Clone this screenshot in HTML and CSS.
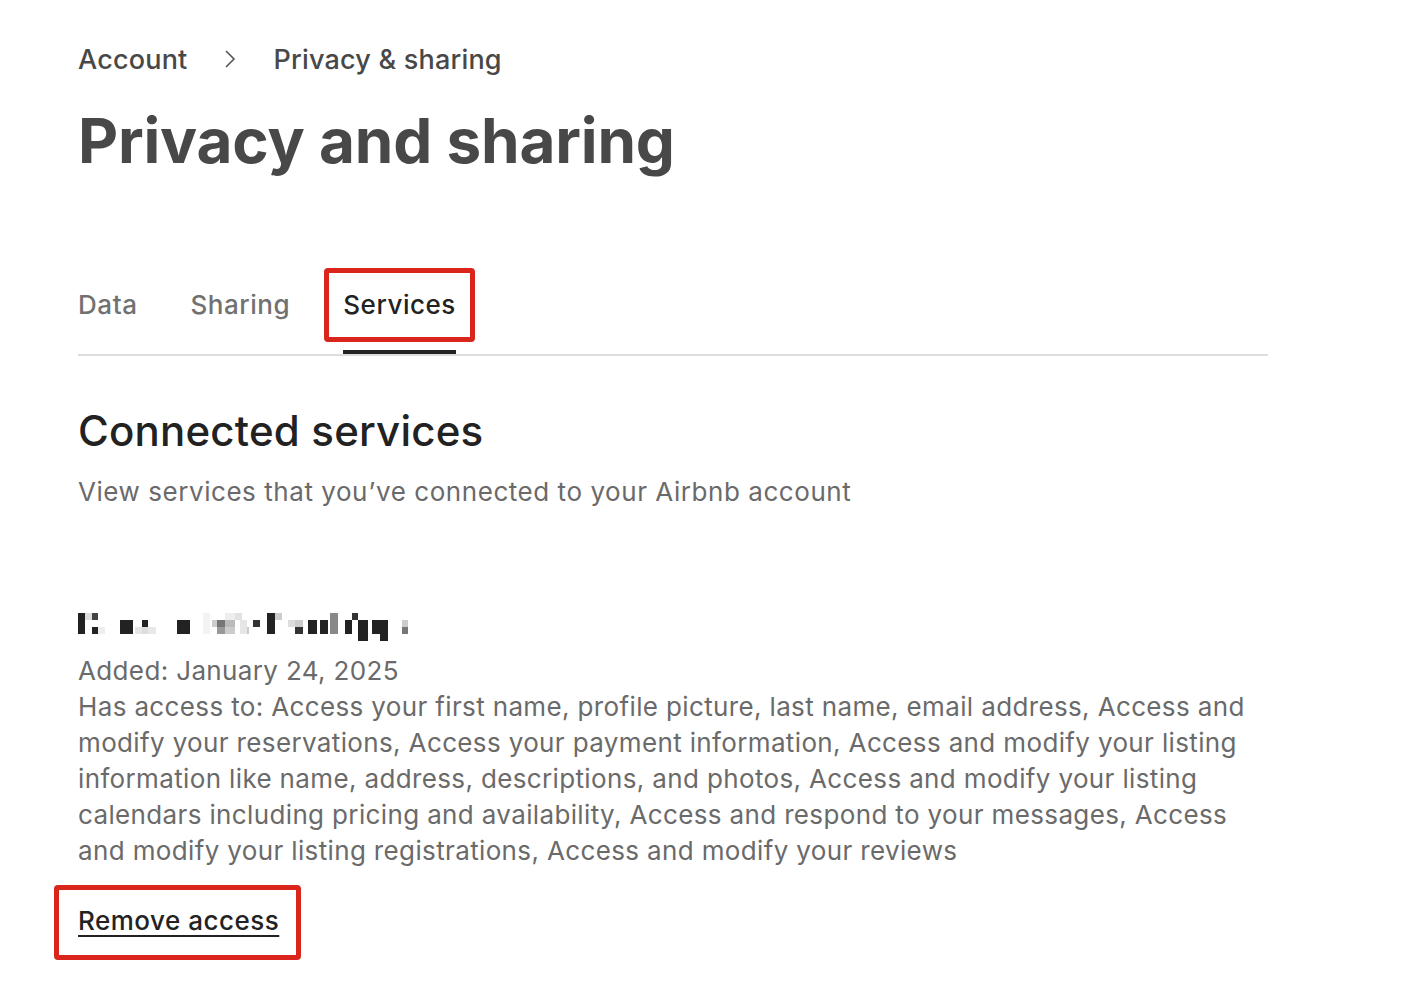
FILE: index.html
```html
<!DOCTYPE html>
<html lang="en">
<head>
    <meta charset="UTF-8" />
    <title>Privacy and sharing</title>
    <link rel="stylesheet" href="styles.css">
</head>
<body>
    <div class="page">
        <nav class="crumbs">
            <span>Account</span>
            <svg class="chevron" viewBox="0 0 12 20" width="12" height="20"><path d="M2 2 L10 10 L2 18" fill="none" stroke="#555" stroke-width="1.6"/></svg>
            <span>Privacy &amp; sharing</span>
        </nav>
        <h1>Privacy and sharing</h1>

        <div class="tabs">
            <div class="tab">Data</div>
            <div class="tab">Sharing</div>
            <div class="tab active">Services<span class="mark"></span></div>
        </div>

        <section class="services">
            <h2>Connected services</h2>
            <p class="lead">View services that you’ve connected to your Airbnb account</p>

            <div class="service">
                <!-- redacted service name -->
                <svg class="redacted" width="340" height="28" viewBox="0 0 340 28">
                    <rect x="0" y="0" width="7" height="21" fill="#222"/>
                    <rect x="7" y="0" width="7" height="7" fill="#ddd"/>
                    <rect x="14" y="0" width="6" height="7" fill="#444"/>
                    <rect x="14" y="14" width="6" height="7" fill="#222"/>
                    <rect x="20" y="14" width="7" height="7" fill="#eee"/>
                    <rect x="42" y="7" width="13" height="14" fill="#222"/>
                    <rect x="57" y="14" width="7" height="7" fill="#e6e6e6"/>
                    <rect x="64" y="7" width="6" height="7" fill="#222"/>
                    <rect x="64" y="14" width="6" height="7" fill="#ddd"/>
                    <rect x="70" y="14" width="8" height="7" fill="#e8e8e8"/>
                    <rect x="99" y="7" width="13" height="14" fill="#222"/>
                    <rect x="125" y="0" width="7" height="21" fill="#f3f3f3"/>
                    <rect x="134" y="7" width="6" height="7" fill="#ccc"/>
                    <rect x="139" y="7" width="8" height="7" fill="#777"/>
                    <rect x="139" y="14" width="8" height="7" fill="#999"/>
                    <rect x="147" y="0" width="10" height="7" fill="#eee"/>
                    <rect x="147" y="7" width="10" height="7" fill="#bbb"/>
                    <rect x="147" y="14" width="10" height="7" fill="#ccc"/>
                    <rect x="157" y="0" width="7" height="7" fill="#e2e2e2"/>
                    <rect x="164" y="14" width="7" height="7" fill="#ccc"/>
                    <rect x="162" y="7" width="7" height="14" fill="#e6e6e6"/>
                    <rect x="175" y="7" width="7" height="7" fill="#333"/>
                    <rect x="189" y="0" width="8" height="21" fill="#222"/>
                    <rect x="197" y="0" width="7" height="7" fill="#ccc"/>
                    <rect x="210" y="7" width="7" height="7" fill="#ddd"/>
                    <rect x="217" y="7" width="8" height="7" fill="#ccc"/>
                    <rect x="217" y="14" width="8" height="7" fill="#333"/>
                    <rect x="230" y="7" width="9" height="14" fill="#222"/>
                    <rect x="242" y="7" width="8" height="14" fill="#222"/>
                    <rect x="252" y="0" width="8" height="21" fill="#888"/>
                    <rect x="267" y="7" width="7" height="14" fill="#222"/>
                    <rect x="274" y="0" width="6" height="7" fill="#333"/>
                    <rect x="280" y="7" width="10" height="21" fill="#222"/>
                    <rect x="294" y="7" width="8" height="14" fill="#222"/>
                    <rect x="302" y="7" width="8" height="21" fill="#222"/>
                    <rect x="324" y="7" width="6" height="7" fill="#ccc"/>
                    <rect x="324" y="14" width="6" height="7" fill="#777"/>
                </svg>
                <p class="meta">Added: January 24, 2025</p>
                <p class="meta">Has access to: Access your first name, profile picture, last name, email address, Access and<br>modify your reservations, Access your payment information, Access and modify your listing<br>information like name, address, descriptions, and photos, Access and modify your listing<br>calendars including pricing and availability, Access and respond to your messages, Access<br>and modify your listing registrations, Access and modify your reviews</p>
                <div class="remove-box">
                    <a class="remove" href="#">Remove access</a>
                </div>
            </div>
        </section>
    </div>
</body>
</html>
```

FILE: styles.css
```css
* {
    margin: 0;
    padding: 0;
    box-sizing: border-box;
}

body {
    font-family: Inter, 'Noto Sans', sans-serif;
    background: #fff;
    color: #222;
}

.page {
    width: 1268px;
    padding: 40px 0 40px 78px;
}

.crumbs {
    display: flex;
    align-items: center;
    gap: 37px;
    font-size: 27px;
    font-weight: 500;
    letter-spacing: 0.2px;
    color: #484848;
    height: 38px;
}

h1 {
    font-size: 62px;
    font-weight: 700;
    color: #484848;
    letter-spacing: -0.2px;
    margin-top: 26px;
    line-height: 1.2;
}

.tabs {
    display: flex;
    gap: 53px;
    margin-top: 103px;
    border-bottom: 2px solid #ddd;
}

.tab {
    position: relative;
    font-size: 26px;
    font-weight: 500;
    letter-spacing: 0.55px;
    color: #717171;
    padding: 8px 0 34px;
}

.tab.active {
    color: #222;
}

/* red highlight box */
.tab.active::before {
    content: '';
    position: absolute;
    left: -19px;
    right: -19px;
    top: -13px;
    bottom: 12px;
    border: 5px solid #d9251b;
    border-radius: 4px;
}

.mark {
    position: absolute;
    left: 0;
    right: 0;
    bottom: 0;
    height: 4px;
    background: #222;
}

.services h2 {
    font-size: 42px;
    font-weight: 500;
    letter-spacing: 0.2px;
    color: #222;
    margin-top: 49px;
}

.lead {
    font-size: 26px;
    letter-spacing: 0.55px;
    color: #6a6a6a;
    margin-top: 20px;
}

.service {
    margin-top: 106px;
}

.redacted {
    display: block;
    margin-bottom: 12px;
}

.meta {
    font-size: 26px;
    line-height: 36px;
    letter-spacing: 0.36px;
    color: #6a6a6a;
}

.remove-box {
    display: inline-block;
    margin: 16px 0 0 -24px;
    padding: 15px 17px 15px 19px;
    border: 5px solid #d9251b;
    border-radius: 4px;
    line-height: 32px;
}

.remove {
    font-size: 26px;
    font-weight: 500;
    letter-spacing: 0.5px;
    color: #222;
    text-decoration: underline;
    text-underline-offset: 5px;
}
```
